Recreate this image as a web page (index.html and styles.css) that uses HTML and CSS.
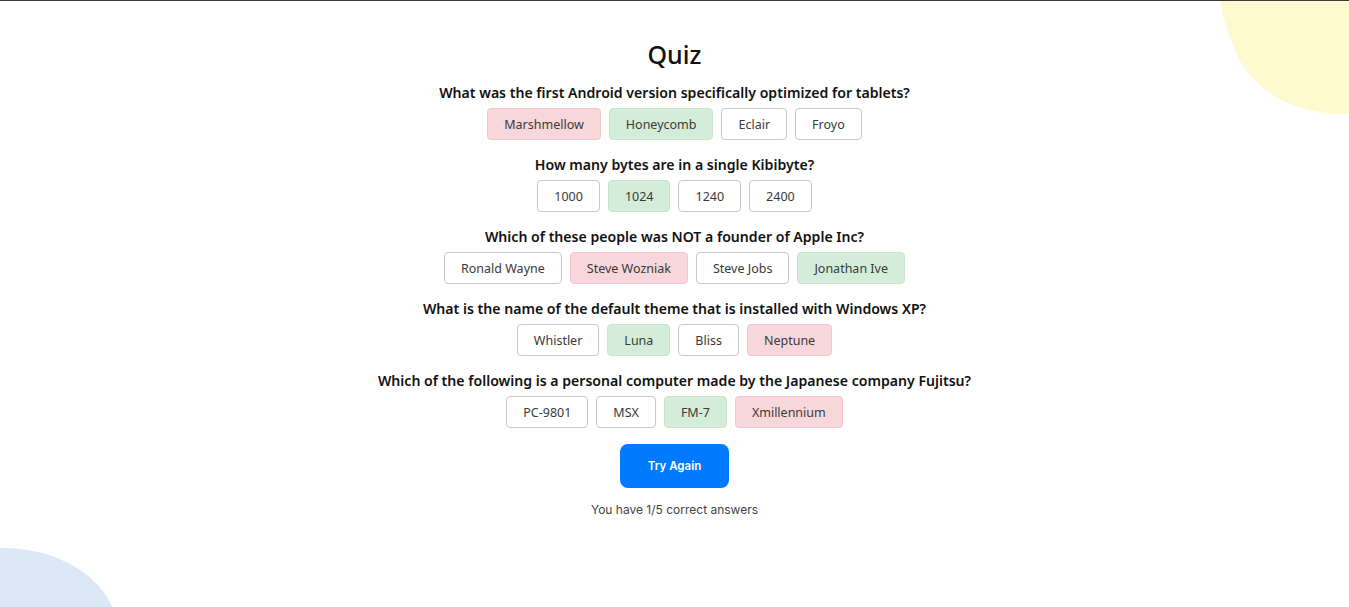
FILE: index.html
```html
<!DOCTYPE html>
<html>
<head>
<meta charset="utf-8">
<link rel="stylesheet" href="styles.css">
</head>
<body>
<div class="backdrop">
  <div class="blob blob-yellow"></div>
  <div class="blob blob-blue"></div>
</div>
<main class="quiz">
  <h1 class="title">Quiz</h1>
  <section class="question">
    <h2 class="q-text">What was the first Android version specifically optimized for tablets?</h2>
    <div class="answers">
      <span class="answer wrong">Marshmellow</span>
      <span class="answer right">Honeycomb</span>
      <span class="answer">Eclair</span>
      <span class="answer">Froyo</span>
    </div>
  </section>
  <section class="question">
    <h2 class="q-text">How many bytes are in a single Kibibyte?</h2>
    <div class="answers">
      <span class="answer">1000</span>
      <span class="answer right">1024</span>
      <span class="answer">1240</span>
      <span class="answer">2400</span>
    </div>
  </section>
  <section class="question">
    <h2 class="q-text">Which of these people was NOT a founder of Apple Inc?</h2>
    <div class="answers">
      <span class="answer">Ronald Wayne</span>
      <span class="answer wrong">Steve Wozniak</span>
      <span class="answer">Steve Jobs</span>
      <span class="answer right">Jonathan Ive</span>
    </div>
  </section>
  <section class="question">
    <h2 class="q-text">What is the name of the default theme that is installed with Windows XP?</h2>
    <div class="answers">
      <span class="answer">Whistler</span>
      <span class="answer right">Luna</span>
      <span class="answer">Bliss</span>
      <span class="answer wrong">Neptune</span>
    </div>
  </section>
  <section class="question">
    <h2 class="q-text">Which of the following is a personal computer made by the Japanese company Fujitsu?</h2>
    <div class="answers">
      <span class="answer">PC-9801</span>
      <span class="answer">MSX</span>
      <span class="answer right">FM-7</span>
      <span class="answer wrong">Xmillennium</span>
    </div>
  </section>
  <button class="btn">Try Again</button>
  <p class="score">You have 1/5 correct answers</p>
</main>
</body>
</html>
```

FILE: styles.css
```css
html, body {
  margin: 0;
  padding: 0;
  overflow: hidden;
}
body {
  border-top: 1px solid #3a3a3a;
  background: #fff;
  font-family: "Noto Sans", sans-serif;
  color: #222;
  height: 606px;
  position: relative;
}
.backdrop {
  position: absolute;
  inset: 0;
  overflow: hidden;
  pointer-events: none;
}
.blob {
  position: absolute;
}
.blob-yellow {
  width: 260px;
  height: 230px;
  right: -135px;
  top: -118px;
  background: #fff9d0;
  border-radius: 40% 50% 55% 60% / 50% 40% 60% 55%;
  transform: rotate(-20deg);
}
.blob-blue {
  width: 240px;
  height: 200px;
  left: -122px;
  top: 547px;
  background: #dde8f6;
  border-radius: 55% 50% 45% 50% / 40% 45% 55% 60%;
}
.quiz {
  position: relative;
  display: flex;
  flex-direction: column;
  align-items: center;
  padding-top: 37px;
}
.title {
  margin: 0 0 13px;
  font-family: "Noto Sans", sans-serif;
  font-size: 25px;
  font-weight: 500;
  line-height: 32px;
  color: #111;
}
.question {
  display: flex;
  flex-direction: column;
  align-items: center;
  margin-bottom: 15px;
}
.q-text {
  margin: 0 0 5px;
  font-family: "Noto Sans", sans-serif;
  font-size: 14.1px;
  font-weight: 600;
  line-height: 20px;
  color: #111;
}
.answers {
  display: flex;
  gap: 8px;
}
.answer {
  box-sizing: border-box;
  height: 32px;
  display: flex;
  align-items: center;
  padding: 0 16px;
  border: 1px solid #c9c9c9;
  border-radius: 4px;
  font-family: "Noto Sans", sans-serif;
  font-size: 12.5px;
  color: #3a3a3a;
  background: #fff;
}
.answer.wrong {
  background: #f8d7da;
  border-color: #f2c5ca;
}
.answer.right {
  background: #d4edda;
  border-color: #c5e6cd;
}
.btn {
  margin-top: 1px;
  width: 109px;
  height: 44px;
  border: none;
  border-radius: 8px;
  background: #007bff;
  color: #fff;
  font-family: "Inter", sans-serif;
  font-size: 11.5px;
  font-weight: 600;
}
.score {
  margin: 14px 0 0;
  font-family: "Inter", sans-serif;
  font-size: 12px;
  line-height: 16px;
  color: #444;
}
```
